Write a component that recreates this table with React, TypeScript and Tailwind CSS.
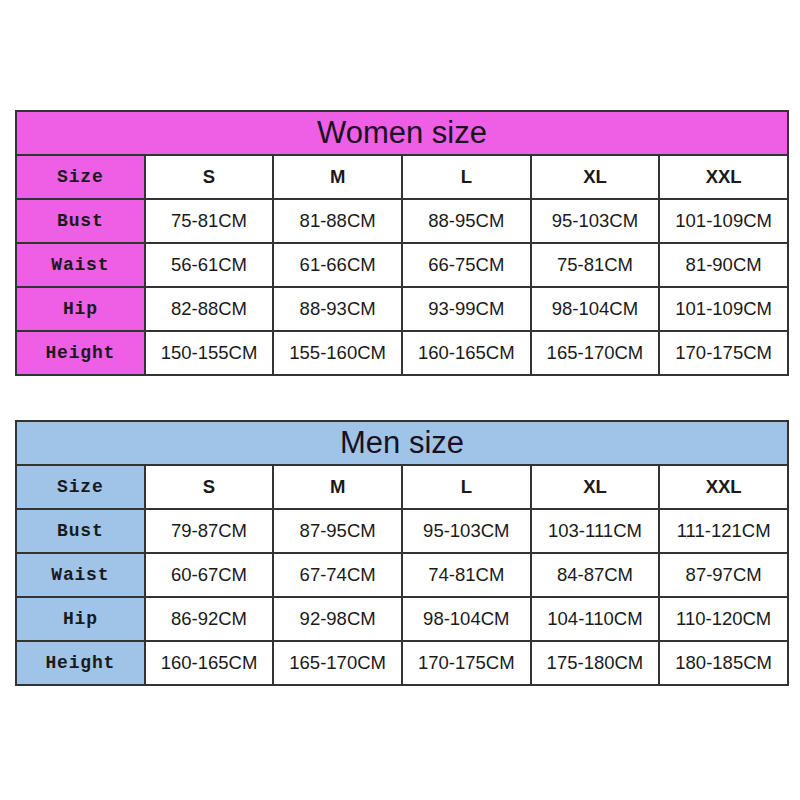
import React from "react";

type Table = {
  title: string;
  color: string;
  rows: { label: string; values: string[] }[];
};

const sizes = ["S", "M", "L", "XL", "XXL"];

const women: Table = {
  title: "Women size",
  color: "pink",
  rows: [
    { label: "Bust", values: ["75-81CM", "81-88CM", "88-95CM", "95-103CM", "101-109CM"] },
    { label: "Waist", values: ["56-61CM", "61-66CM", "66-75CM", "75-81CM", "81-90CM"] },
    { label: "Hip", values: ["82-88CM", "88-93CM", "93-99CM", "98-104CM", "101-109CM"] },
    { label: "Height", values: ["150-155CM", "155-160CM", "160-165CM", "165-170CM", "170-175CM"] },
  ],
};

const men: Table = {
  title: "Men size",
  color: "blue",
  rows: [
    { label: "Bust", values: ["79-87CM", "87-95CM", "95-103CM", "103-111CM", "111-121CM"] },
    { label: "Waist", values: ["60-67CM", "67-74CM", "74-81CM", "84-87CM", "87-97CM"] },
    { label: "Hip", values: ["86-92CM", "92-98CM", "98-104CM", "104-110CM", "110-120CM"] },
    { label: "Height", values: ["160-165CM", "165-170CM", "170-175CM", "175-180CM", "180-185CM"] },
  ],
};

function SizeTable({ t }: { t: Table }) {
  const bg = t.color === "pink" ? "bg-[#ee5fe6]" : "bg-[#9fc4e7]";
  const labelCls = `${bg} border-2 border-[#333] h-[44px] w-[129px] p-0 text-center align-middle text-[18px] leading-none font-bold tracking-[0.8px] text-[#1a1a1a] [font-family:'Liberation_Mono',monospace]`;
  const cellCls =
    "bg-white border-2 border-[#333] h-[44px] w-[129px] p-0 text-center align-middle text-[18.5px] leading-none text-[#1a1a1a] [font-family:'Liberation_Sans',Arial,sans-serif]";
  return (
    <table className="border-collapse table-fixed w-[774px] border-2 border-[#333]">
      <tbody>
        <tr>
          <td
            colSpan={6}
            className={`${bg} border-2 border-[#333] h-[44px] p-0 pb-[2px] text-center align-middle text-[31px] leading-none text-[#1a1020] [font-family:'Liberation_Sans',Arial,sans-serif]`}
          >
            {t.title}
          </td>
        </tr>
        <tr>
          <td className={labelCls}>Size</td>
          {sizes.map((s) => (
            <td key={s} className={`${cellCls} font-bold`}>
              {s}
            </td>
          ))}
        </tr>
        {t.rows.map((r) => (
          <tr key={r.label}>
            <td className={labelCls}>{r.label}</td>
            {r.values.map((v, i) => (
              <td key={i} className={cellCls}>
                {v}
              </td>
            ))}
          </tr>
        ))}
      </tbody>
    </table>
  );
}

export default function App() {
  return (
    <div className="w-[800px] h-[800px] bg-white flex flex-col pt-[110px] pl-[15px] gap-[44px]">
      <SizeTable t={women} />
      <SizeTable t={men} />
    </div>
  );
}
